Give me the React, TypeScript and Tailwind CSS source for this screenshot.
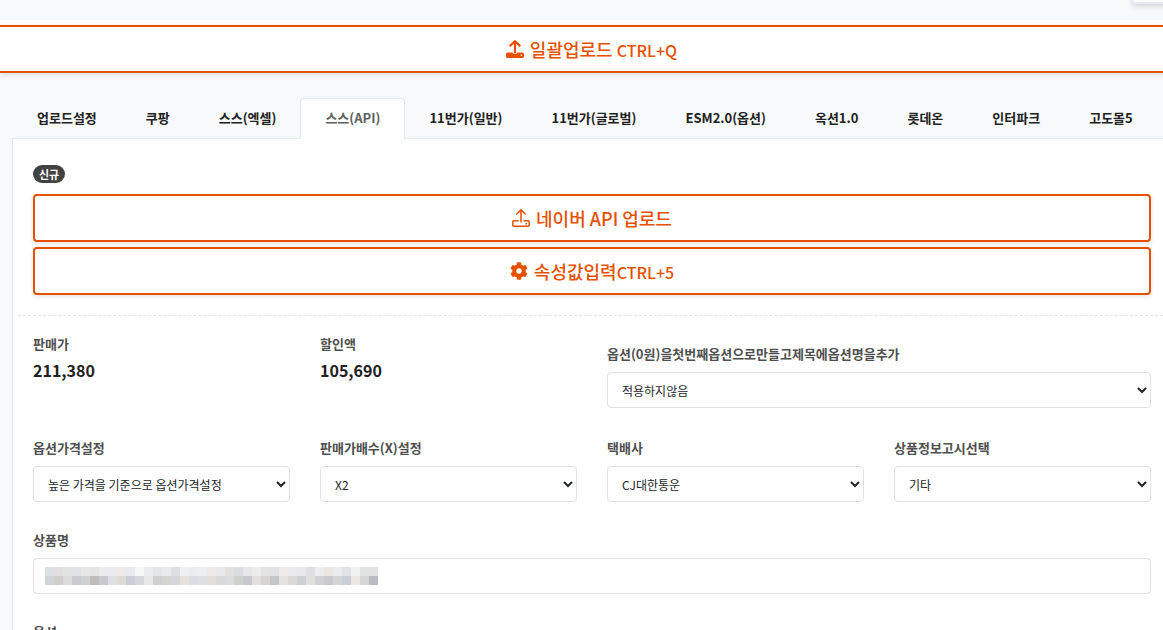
import type { ReactNode } from 'react';
import { FaCog } from 'react-icons/fa';

const tabs = [
  '업로드설정',
  '쿠팡',
  '스스(엑셀)',
  '스스(API)',
  '11번가(일반)',
  '11번가(글로벌)',
  'ESM2.0(옵션)',
  '옥션1.0',
  '롯데온',
  '인터파크',
  '고도몰5',
];

const mosaic = [
  '#dce0e4 #e2dedd #dfe4e3 #e0e1e5 #e7e8e6 #e3e4e4 #ebebeb #ebebed #eeeae8 #e8eaef #f5f8f7 #ebecee #e4e5e6 #e9eaec #dedfe1 #eff0f0 #ebedef #eceef0 #edeae8 #e7e9eb #e2e1e0 #d9dddf #e6e7e9 #eeecea #e1e4e4 #e0e2e3 #eeebe9 #e8eaec #e9e9eb #e0e0e2 #ebedef #eae6e4 #eaebed #e0e2e4 #f0f1f1 #e1e2e4 #e0e3e2',
  '#d0d4d9 #d0cfca #d9dcda #cacad0 #d0d1d1 #bfbdbb #c9cace #dfe0e4 #dfdbd5 #cbced6 #d5d7db #e7e7e6 #d0d0d0 #d6d4d1 #d5d6d9 #e5e2dd #d9dde4 #dcdfe3 #e2dfdb #d8dad9 #dadbdd #cfd1ce #c9c9cd #e2e1df #d6d5d2 #c3c5ca #e5e3e0 #dad9d5 #cdd0d5 #e0dfdd #d1d1d3 #cacacc #d4d4d5 #cbced6 #ebe7e2 #d6d6d6 #b9bdc3',
].map((row) => row.split(' '));

function UploadIcon({ filled = false }: { filled?: boolean }) {
  if (filled) {
    return (
      <svg viewBox="0 0 18 18" className="size-[18px]" aria-hidden="true">
        <path
          d="M9 12.5V2M4.3 5.6 9 1.2l4.7 4.4"
          fill="none"
          stroke="currentColor"
          strokeWidth="2.2"
          strokeLinecap="round"
          strokeLinejoin="round"
        />
        <path
          d="M1.8 12.4h4.9a2.4 2.4 0 0 0 4.6 0h4.9c1 0 1.8.8 1.8 1.8v2c0 1-.8 1.8-1.8 1.8H1.8c-1 0-1.8-.8-1.8-1.8v-2c0-1 .8-1.8 1.8-1.8Z"
          fill="currentColor"
        />
        <circle cx="15.3" cy="15.2" r=".8" fill="white" />
      </svg>
    );
  }
  return (
    <svg
      viewBox="0 0 18 18"
      className="size-[18px]"
      fill="none"
      stroke="currentColor"
      strokeWidth="1.5"
      strokeLinecap="round"
      strokeLinejoin="round"
      aria-hidden="true"
    >
      <path d="M9 13V1M4.7 5 9 .9 13.3 5M6 11.8H2c-.7 0-1.2.5-1.2 1.2v3c0 .7.5 1.2 1.2 1.2h14c.7 0 1.2-.5 1.2-1.2v-3c0-.7-.5-1.2-1.2-1.2h-4" />
      <circle cx="14.3" cy="14.6" r=".9" fill="currentColor" stroke="none" />
    </svg>
  );
}

function ActionButton({ icon, className = '', children }: { icon: ReactNode; className?: string; children: ReactNode }) {
  return (
    <button
      type="button"
      className={`flex h-12 w-full items-center justify-center gap-1.5 border-2 border-[#e65100] bg-white text-lg font-medium text-[#e65100] shadow-[0_2px_5px_rgba(0,0,0,0.1)] ${className}`}
    >
      {icon}
      <span>{children}</span>
    </button>
  );
}

function SelectField({ id, label, value, className = '' }: { id: string; label: string; value: string; className?: string }) {
  return (
    <div className={className}>
      <label htmlFor={id} className="block text-[13px] leading-5 font-bold text-[#4f4f4f]">
        {label}
      </label>
      <select id={id} className="mt-2 h-9 w-full rounded border border-[#e0e0e0] bg-white px-2.5 text-xs text-[#212529]">
        <option>{value}</option>
      </select>
    </div>
  );
}

function Price({ label, value }: { label: string; value: string }) {
  return (
    <div>
      <div className="text-[13px] leading-5 font-bold text-[#4f4f4f]">{label}</div>
      <div className="mt-1 text-base leading-6 font-bold text-[#212121]">{value}</div>
    </div>
  );
}

export default function App() {
  return (
    <div className="relative h-screen overflow-hidden bg-[#f8f9fb] font-['Noto_Sans_CJK_KR',sans-serif]">
      <div className="absolute -top-2 -right-2 h-3 w-10 rounded border-b-2 border-l-2 border-[#e7eaf0] bg-white shadow-md" />

      <div className="mt-5 -mr-5 bg-white pt-[5px]">
        <ActionButton icon={<UploadIcon filled />} className="border-x-0">
          일괄업로드 <span className="text-base">CTRL+Q</span>
        </ActionButton>
      </div>

      <nav className="relative mt-[25px] ml-3 flex -space-x-px whitespace-nowrap" role="tablist">
        {tabs.map((tab) => (
          <button
            key={tab}
            type="button"
            role="tab"
            aria-selected={tab === '스스(API)'}
            className={
              tab === '스스(API)'
                ? '-mb-px h-[41px] shrink-0 rounded-t border border-b-0 border-[#e3e8ec] bg-white px-6 pb-0.5 text-[13px] font-bold text-[#616161]'
                : 'h-10 shrink-0 border border-transparent px-6 text-[13px] font-bold text-[#212121]'
            }
          >
            {tab}
          </button>
        ))}
      </nav>

      <main className="ml-3 border-t border-l border-[#e3e8ec] bg-white pt-[26px] pr-3 pb-8 pl-5">
        <span className="flex h-[18px] w-8 items-center justify-center rounded-full bg-[#424242] text-[11px] font-bold text-white">
          신규
        </span>

        <div className="mt-[11px] space-y-[5px]">
          <ActionButton icon={<UploadIcon />} className="rounded">
            네이버 API 업로드
          </ActionButton>
          <ActionButton icon={<FaCog className="size-[18px]" aria-hidden="true" />} className="rounded">
            속성값입력<span className="text-base">CTRL+5</span>
          </ActionButton>
        </div>

        <hr className="mt-5 -mr-3 -ml-[15px] border-dashed border-[#e4e4e4]" />

        <form className="mt-[18px]">
          <div className="grid grid-cols-4 gap-x-[30px]">
            <Price label="판매가" value="211,380" />
            <Price label="할인액" value="105,690" />
            <SelectField
              id="option-title"
              label="옵션(0원)을첫번째옵션으로만들고제목에옵션명을추가"
              value="적용하지않음"
              className="col-span-2 mt-2.5"
            />
          </div>

          <div className="mt-[30px] grid grid-cols-4 gap-x-[30px]">
            <SelectField id="option-price" label="옵션가격설정" value="높은 가격을 기준으로 옵션가격설정" />
            <SelectField id="multiple" label="판매가배수(X)설정" value="X2" />
            <SelectField id="courier" label="택배사" value="CJ대한통운" />
            <SelectField id="notice" label="상품정보고시선택" value="기타" />
          </div>

          <div className="relative mt-7">
            <label htmlFor="product-name" className="block text-[13px] leading-5 font-bold text-[#4f4f4f]">
              상품명
            </label>
            <input id="product-name" type="text" className="mt-2 block h-9 w-full rounded border border-[#e0e0e0] bg-white px-2.5 text-xs" />
            <div className="pointer-events-none absolute bottom-[9px] left-3" aria-hidden="true">
              {mosaic.map((row, y) => (
                <div key={y} className="flex">
                  {row.map((color, x) => (
                    <span key={x} className="size-[9px]" style={{ backgroundColor: color }} />
                  ))}
                </div>
              ))}
            </div>
          </div>

          <div className="mt-7 text-[13px] leading-5 font-bold text-[#4f4f4f]">옵션</div>
        </form>
      </main>
    </div>
  );
}
